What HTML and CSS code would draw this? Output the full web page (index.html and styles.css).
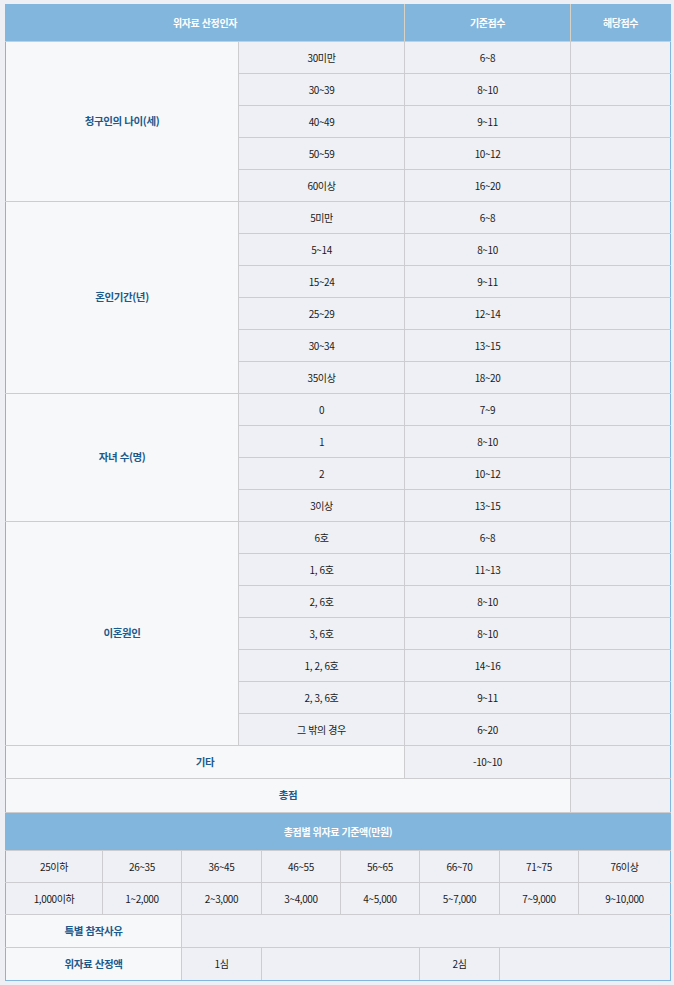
FILE: index.html
```html
<!DOCTYPE html>
<html lang="ko">
<head>
<meta charset="utf-8">
<title>위자료 산정</title>
<link rel="stylesheet" href="styles.css">
</head>
<body>
<div class="wrap">
<table class="tbl top">
  <colgroup><col class="c1"><col class="c2"><col class="c3"><col class="c4"></colgroup>
  <thead>
    <tr class="head"><th colspan="2">위자료 산정인자</th><th>기준점수</th><th>해당점수</th></tr>
  </thead>
  <tbody>
    <tr><td class="lbl" rowspan="5">청구인의 나이(세)</td><td>30미만</td><td>6~8</td><td></td></tr>
    <tr><td>30~39</td><td>8~10</td><td></td></tr>
    <tr><td>40~49</td><td>9~11</td><td></td></tr>
    <tr><td>50~59</td><td>10~12</td><td></td></tr>
    <tr><td>60이상</td><td>16~20</td><td></td></tr>
    <tr><td class="lbl" rowspan="6">혼인기간(년)</td><td>5미만</td><td>6~8</td><td></td></tr>
    <tr><td>5~14</td><td>8~10</td><td></td></tr>
    <tr><td>15~24</td><td>9~11</td><td></td></tr>
    <tr><td>25~29</td><td>12~14</td><td></td></tr>
    <tr><td>30~34</td><td>13~15</td><td></td></tr>
    <tr><td>35이상</td><td>18~20</td><td></td></tr>
    <tr><td class="lbl" rowspan="4">자녀 수(명)</td><td>0</td><td>7~9</td><td></td></tr>
    <tr><td>1</td><td>8~10</td><td></td></tr>
    <tr><td>2</td><td>10~12</td><td></td></tr>
    <tr><td>3이상</td><td>13~15</td><td></td></tr>
    <tr><td class="lbl" rowspan="7">이혼원인</td><td>6호</td><td>6~8</td><td></td></tr>
    <tr><td>1, 6호</td><td>11~13</td><td></td></tr>
    <tr><td>2, 6호</td><td>8~10</td><td></td></tr>
    <tr><td>3, 6호</td><td>8~10</td><td></td></tr>
    <tr><td>1, 2, 6호</td><td>14~16</td><td></td></tr>
    <tr><td>2, 3, 6호</td><td>9~11</td><td></td></tr>
    <tr><td>그 밖의 경우</td><td>6~20</td><td></td></tr>
    <tr class="r33"><td class="lbl" colspan="2">기타</td><td>-10~10</td><td></td></tr>
    <tr class="r34"><td class="lbl" colspan="3">총점</td><td></td></tr>
  </tbody>
</table>
<table class="tbl bottom">
  <colgroup>
    <col class="b1"><col class="b2"><col class="b3"><col class="b4"><col class="b5"><col class="b6"><col class="b7"><col class="b8">
  </colgroup>
  <thead>
    <tr class="head2"><th colspan="8">총점별 위자료 기준액(만원)</th></tr>
  </thead>
  <tbody>
    <tr><td>25이하</td><td>26~35</td><td>36~45</td><td>46~55</td><td>56~65</td><td>66~70</td><td>71~75</td><td>76이상</td></tr>
    <tr><td>1,000이하</td><td>1~2,000</td><td>2~3,000</td><td>3~4,000</td><td>4~5,000</td><td>5~7,000</td><td>7~9,000</td><td>9~10,000</td></tr>
    <tr class="r33"><td class="lbl" colspan="2">특별 참작사유</td><td colspan="6"></td></tr>
    <tr class="r33"><td class="lbl" colspan="2">위자료 산정액</td><td>1심</td><td colspan="2"></td><td>2심</td><td colspan="2"></td></tr>
  </tbody>
</table>
</div>
</body>
</html>
```
FILE: styles.css
```css
html, body {
  margin: 0;
  padding: 0;
  background: #eeeff4;
}
body {
  padding: 4px 0 0 5px;
  font-family: "Noto Sans CJK KR", "Noto Sans", sans-serif;
  font-size: 10px;
  color: #1a1a1a;
}
.wrap {
  width: 665px;
}
.tbl {
  width: 665px;
  border-collapse: collapse;
  table-layout: fixed;
  letter-spacing: -0.4px;
}
.tbl td, .tbl th {
  border: 1px solid #cdcdcf;
  text-align: center;
  vertical-align: middle;
  padding: 0;
  height: 31px;
  background: #eff0f5;
  line-height: 1;
}
.tbl td.lbl {
  background: #f7f8fa;
  color: #1b5a8c;
  font-weight: bold;
  font-size: 10.5px;
}
.tbl tr > :first-child { border-left: 1px solid #82b6dc; }
.tbl tr > :last-child { border-right: 1px solid #82b6dc; }
.c1 { width: 233px; }
.c2 { width: 166px; }
.c3 { width: 166px; }
.c4 { width: 100px; }
.tbl .head th {
  background: #82b6dc;
  color: #fff;
  font-weight: bold;
  font-size: 10px;
  height: 37px;
  border-top: 0;
  border-left: 1px solid #d6d2c8;
  border-right: 1px solid #d6d2c8;
  border-bottom: 1px solid #cdcdcf;
}
.tbl .head th:first-child { border-left: 1px solid #82b6dc; }
.tbl .head th:last-child { border-right: 1px solid #82b6dc; }
.tbl .r33 td { height: 32px; }
.tbl .r34 td { height: 33px; }
.tbl.bottom { border-bottom: 1px solid #82b6dc; }
.tbl.bottom tr:last-child td { border-bottom: 1px solid #82b6dc; }
.b1 { width: 97px; }
.b2 { width: 79px; }
.b3 { width: 80px; }
.b4 { width: 79px; }
.b5 { width: 79px; }
.b6 { width: 80px; }
.b7 { width: 79px; }
.b8 { width: 92px; }
.tbl .head2 th {
  background: #82b6dc;
  color: #fff;
  font-weight: bold;
  font-size: 10px;
  height: 37px;
  border: 0;
  border-left: 1px solid #82b6dc;
  border-right: 1px solid #82b6dc;
  border-bottom: 1px solid #cdcdcf;
}
```
